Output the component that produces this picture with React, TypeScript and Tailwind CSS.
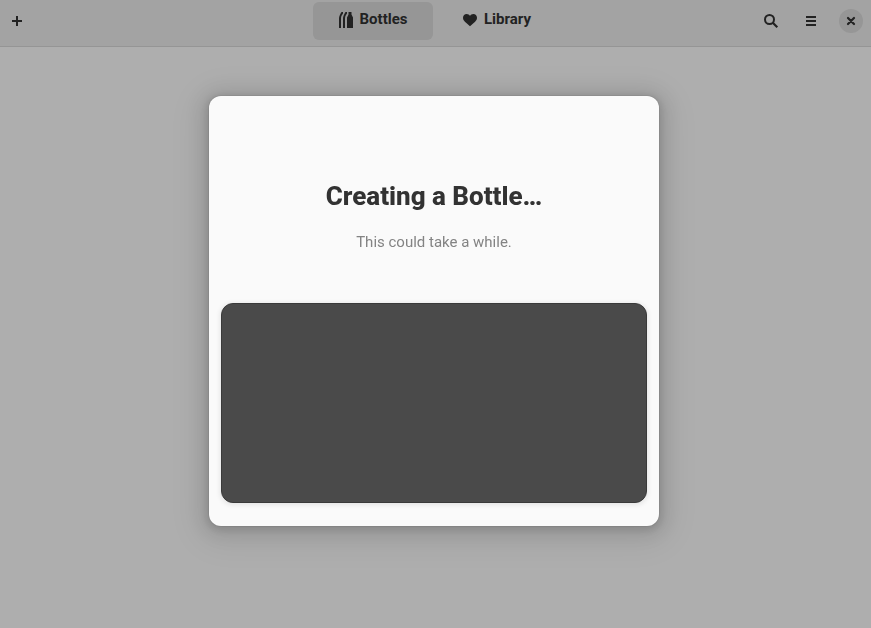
const BottlesIcon = () => (
  <svg width="16" height="16" viewBox="0 0 16 16" fill="currentColor" aria-hidden="true">
    <path d="M10.500 0h3v2.500L15 5.500V16H9V5.500l1.500-3z" />
    <path d="M7.500 0H9v1.500C7.800 3 7 4.500 7 6.500V16H5V6.500C5 4.500 6 2.500 7.500 0z" />
    <path d="M3.500 0H5v1.500C3.800 3 3 4.500 3 6.500V16H1V6.500C1 4.500 2 2.500 3.500 0z" />
  </svg>
);

const HeartIcon = () => (
  <svg width="16" height="16" viewBox="0 0 16 16" fill="currentColor" aria-hidden="true">
    <path d="M4.700 2C2.600 2 1 3.700 1 5.800c0 1.600.8 2.800 1.900 3.900L8 14.300l5.100-4.600C14.200 8.600 15 7.400 15 5.800 15 3.700 13.400 2 11.300 2 9.900 2 8.700 2.700 8 3.900 7.300 2.700 6.100 2 4.700 2z" />
  </svg>
);

const PlusIcon = () => (
  <svg width="16" height="16" viewBox="0 0 16 16" fill="currentColor" aria-hidden="true">
    <path d="M7 3h2v4h4v2H9v4H7V9H3V7h4z" />
  </svg>
);

const SearchIcon = () => (
  <svg width="16" height="16" viewBox="0 0 16 16" fill="none" stroke="currentColor" strokeWidth="2" aria-hidden="true">
    <circle cx="6.500" cy="6.500" r="4.500" />
    <path d="M9.800 9.800l4.500 4.500" strokeWidth="2.200" />
  </svg>
);

const MenuIcon = () => (
  <svg width="16" height="16" viewBox="0 0 16 16" fill="currentColor" aria-hidden="true">
    <path d="M3 3h10v2H3zM3 7h10v2H3zM3 11h10v2H3z" />
  </svg>
);

const CloseIcon = () => (
  <svg width="16" height="16" viewBox="0 0 16 16" fill="none" stroke="currentColor" strokeWidth="2.200" strokeLinecap="round" aria-hidden="true">
    <path d="M5 5l6 6M11 5l-6 6" />
  </svg>
);

const HeaderBar = () => {
  return (
    <header className="grid grid-cols-[1fr_auto_1fr] items-start h-[47px] pr-[2px] bg-[#a3a3a3] border-b border-[#959595] text-[#222222]">
      <div className="flex pt-1">
        <button aria-label="New bottle" className="w-[34px] h-[34px] flex items-center justify-center">
          <PlusIcon />
        </button>
      </div>
      <nav className="flex gap-1 pt-0.5 text-[15px] leading-[34px] font-bold">
        <button className="w-[120px] h-[38px] flex justify-center gap-[6px] rounded-md bg-[#969696]">
          <span className="pt-[10px]">
            <BottlesIcon />
          </span>
          Bottles
        </button>
        <button className="w-[120px] h-[38px] flex justify-center gap-[6px] rounded-md">
          <span className="pt-[10px]">
            <HeartIcon />
          </span>
          Library
        </button>
      </nav>
      <div className="flex items-center justify-end gap-[6px] pt-1 pr-[6px]">
        <button aria-label="Search" className="w-[34px] h-[34px] flex items-center justify-center">
          <SearchIcon />
        </button>
        <button aria-label="Main menu" className="w-[34px] h-[34px] flex items-center justify-center">
          <MenuIcon />
        </button>
        <button aria-label="Close" className="w-6 h-6 ml-[5px] flex items-center justify-center rounded-full bg-[#969696]">
          <CloseIcon />
        </button>
      </div>
    </header>
  );
};

const CreatingDialog = () => {
  return (
    <div className="fixed inset-0 flex items-center justify-center pb-[6px] pr-[3px]">
      <div
        role="dialog"
        aria-labelledby="dialog-title"
        className="w-full max-w-[450px] rounded-xl bg-[#fafafa] px-3 pt-20 pb-[23px] text-center shadow-[0_2px_8px_2px_rgba(0,0,0,0.13),0_3px_20px_10px_rgba(0,0,0,0.09),0_6px_32px_16px_rgba(0,0,0,0.04),0_0_0_1px_rgba(0,0,0,0.05)]"
      >
        <h1 id="dialog-title" className="text-[26px] leading-10 font-extrabold text-[#323232]">
          Creating a Bottle…
        </h1>
        <p className="mt-4 text-[15px] leading-5 text-[#838383]">This could take a while.</p>
        <div className="mt-[51px] h-[200px] rounded-xl bg-[#4a4a4a] border border-[#3a3a3a] shadow-[0_1px_5px_1px_rgba(0,0,0,0.09)]"></div>
      </div>
    </div>
  );
};

const App = () => {
  return (
    <div className="min-h-screen bg-[#aeaeae] font-[Roboto,sans-serif]">
      <HeaderBar />
      <CreatingDialog />
    </div>
  );
};

export default App;
